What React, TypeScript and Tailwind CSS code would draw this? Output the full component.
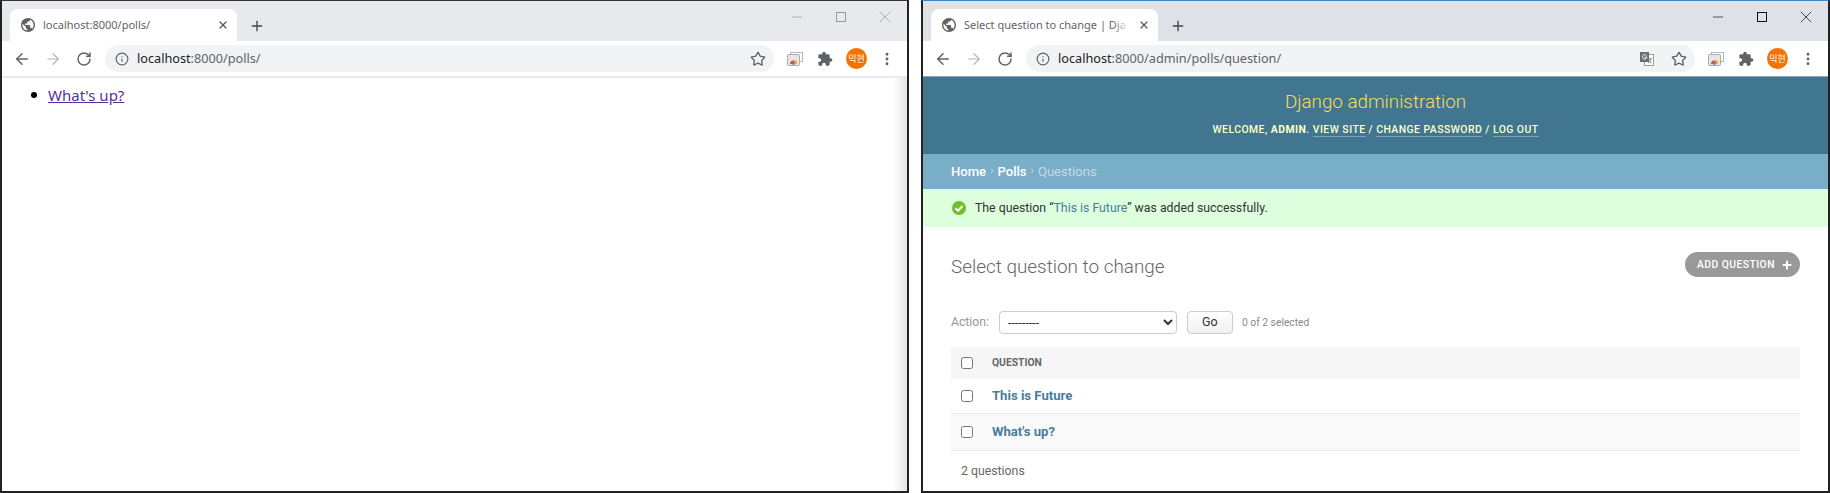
import React from 'react';
import { ArrowLeft, ArrowRight, Info, Minus, MoreVertical, Plus, RotateCw, Star, X } from 'lucide-react';

const globePath =
  'M12 2C6.48 2 2 6.48 2 12s4.48 10 10 10 10-4.48 10-10S17.52 2 12 2zm-1 17.93c-3.95-.49-7-3.85-7-7.93 0-.62.08-1.21.21-1.79L9 15v1c0 1.1.9 2 2 2v1.93zm6.9-2.54c-.26-.81-1-1.39-1.9-1.39h-1v-3c0-.55-.45-1-1-1H8v-2h2c.55 0 1-.45 1-1V7h2c1.1 0 2-.9 2-2v-.41c2.93 1.19 5 4.06 5 7.41 0 2.08-.8 3.97-2.1 5.39z';
const puzzlePath =
  'M20.5 11H19V7c0-1.1-.9-2-2-2h-4V3.5C13 2.12 11.88 1 10.5 1S8 2.12 8 3.5V5H4c-1.1 0-1.99.9-1.99 2v3.8H3.5c1.49 0 2.7 1.21 2.7 2.7s-1.21 2.7-2.7 2.7H2V20c0 1.1.9 2 2 2h3.8v-1.5c0-1.49 1.21-2.7 2.7-2.7 1.49 0 2.7 1.21 2.7 2.7V22H17c1.1 0 2-.9 2-2v-4h1.5c1.38 0 2.5-1.12 2.5-2.5S21.88 11 20.5 11z';

const TabsIcon = () => (
  <svg width="16" height="14" viewBox="0 0 16 14" className="ml-[13px] shrink-0">
    <rect x="3.5" y="0.5" width="12" height="9" fill="#fff" stroke="#b5b7ba" />
    <rect x="0.5" y="2.5" width="12" height="11" rx="1" fill="#e4e5e7" stroke="#a9abae" />
    <path d="M3 12a3.5 3.5 0 0 1 7 0z" fill="#dd4b3e" />
    <path d="M6.5 12a3.5 3.5 0 0 1 3.5-3.5V12z" fill="#f4b400" />
    <circle cx="6.5" cy="11.5" r="1.4" fill="#4285f4" />
  </svg>
);

const TranslateIcon = () => (
  <svg width="14" height="14" viewBox="0 0 14 14" className="shrink-0">
    <rect x="4.5" y="2.5" width="9" height="11" fill="#fff" stroke="#9a9da1" />
    <rect x="0" y="0" width="9" height="10" fill="#6a6d71" />
    <path d="M6.5 3.4A2.3 2.3 0 1 0 7 5.2H4.6" fill="none" stroke="#fff" strokeWidth="1" />
    <path d="M8 7h4M10 6v1M11 7c-.4 2-1.500 3-3 4M9 8.500c.6 1.200 1.500 2 2.700 2.500" fill="none" stroke="#777" strokeWidth=".8" />
  </svg>
);

const ChromeBar = ({ active, title, url, translate }: { active: boolean; title: string; url: string; translate?: boolean }) => (
  <>
    <div className={`flex h-[40px] items-start pl-[8px] ${active ? 'bg-[#dee1e6]' : 'bg-[#e7e9ec]'}`}>
      <div className="mt-[8px] flex h-[32px] w-[227px] items-center rounded-t-[8px] bg-white pl-[11px] pr-[8px]">
        <svg width="14" height="14" viewBox="2 2 20 20" className="shrink-0">
          <path d={globePath} fill="#5f6368" />
        </svg>
        <div className="relative ml-[8px] w-[165px] whitespace-nowrap font-['Noto_Sans','Noto_Sans_CJK_KR',sans-serif] text-[11px] text-[#5f6368]">
          {title}
          {active && <span className="absolute right-0 top-0 h-full w-[16px] bg-gradient-to-r from-transparent to-white" />}
        </div>
        <X size={12} strokeWidth={2.4} className="ml-auto shrink-0 text-[#55585c]" />
      </div>
      <Plus size={16} strokeWidth={2} className="ml-[12px] mt-[17px] shrink-0 text-[#404347]" />
      <div className="ml-auto flex items-center gap-[26px] pr-[12px] pt-[6px]">
        <Minus size={16} strokeWidth={1} className={`mr-[2px] ${active ? 'text-[#111]' : 'text-[#999]'}`} />
        <div className={`mx-[3px] h-[10px] w-[10px] border ${active ? 'border-[#111]' : 'border-[#999]'}`} />
        <X size={20} strokeWidth={0.9} className={active ? 'text-[#111]' : 'text-[#999]'} />
      </div>
    </div>
    <div className="flex h-[35px] items-center bg-white pl-[11px] pr-[12px]">
      <ArrowLeft size={18} strokeWidth={2} className="shrink-0 text-[#5f6368]" />
      <ArrowRight size={18} strokeWidth={1.600} className="ml-[13px] shrink-0 text-[#b4b6b9]" />
      <RotateCw size={16} strokeWidth={2.200} className="ml-[14px] shrink-0 text-[#5f6368]" />
      <div className="ml-[13px] flex h-[27px] flex-1 items-center rounded-full bg-[#f1f3f4] pl-[10px] pr-[8px]">
        <Info size={14} strokeWidth={2} className="shrink-0 text-[#5f6368]" />
        <span className="ml-[8px] font-['Noto_Sans','Noto_Sans_CJK_KR',sans-serif] text-[12.700px] text-[#5f6368]">
          <span className="text-[#202124]">localhost</span>:8000{url}
        </span>
        <div className="ml-auto flex items-center gap-[17px]">
          {translate && <TranslateIcon />}
          <Star size={16} strokeWidth={2} className="shrink-0 text-[#5f6368]" />
        </div>
      </div>
      <TabsIcon />
      <svg width="16" height="16" viewBox="0 0 24 24" className="ml-[14px] shrink-0">
        <path d={puzzlePath} fill="#5f6368" />
      </svg>
      <div className="ml-[13px] flex h-[21px] w-[21px] shrink-0 items-center justify-center rounded-full bg-[#f57200] font-['Noto_Sans_CJK_KR',sans-serif] text-[9px] text-white">
        익현
      </div>
      <MoreVertical size={16} strokeWidth={2.400} className="ml-[12px] shrink-0 text-[#5f6368]" />
    </div>
  </>
);

const PollsWindow = () => (
  <div className="flex h-[493px] w-[909px] shrink-0 flex-col border-x-2 border-b-2 border-t border-x-[#222] border-b-[#222] border-t-[#333] bg-white">
    <ChromeBar active={false} title="localhost:8000/polls/" url="/polls/" />
    <div className="relative flex-1 border-t-2 border-[#e8eaed] pl-[29px] pt-[6px] font-['Noto_Sans','Noto_Sans_CJK_KR',sans-serif] text-[15px]">
      <div className="flex items-center">
        <span className="h-[6px] w-[6px] rounded-full bg-black" />
        <a className="ml-[11px] text-[#5c2d9c] underline">What's up?</a>
      </div>
      <div className="absolute inset-y-0 right-0 w-[14px] bg-gradient-to-r from-transparent to-black/10" />
    </div>
  </div>
);

const AdminWindow = () => (
  <div className="ml-[12px] flex h-[493px] w-[909px] shrink-0 flex-col border-x-2 border-b-2 border-t border-x-[#222] border-b-[#222] border-t-[#3a87c8] bg-white">
    <ChromeBar active title="Select question to change | Dja" url="/admin/polls/question/" translate />
    <div className="flex-1 font-['Roboto',sans-serif]">
      <div className="flex h-[78px] flex-col items-center border-t border-[#8fa9b8] bg-[#417690] pt-[12px]">
        <h1 className="text-[18.800px] font-light leading-[26px] text-[#f5dd5d]">Django administration</h1>
        <div className="mt-[8px] text-[10.400px] font-medium uppercase leading-[14px] tracking-[0.47px] text-[#ffc]">
          Welcome, <strong className="font-bold">admin</strong>. <a className="border-b border-[#ffffff55]">View site</a> / <a className="border-b border-[#ffffff55]">Change password</a> / <a className="border-b border-[#ffffff55]">Log out</a>
        </div>
      </div>
      <div className="flex h-[35px] items-center bg-[#79aec8] pl-[28px] text-[13.100px] text-[#c4dce8]">
        <a className="font-medium text-white">Home</a>
        <span className="mx-[4px] text-[11px]">›</span>
        <a className="font-medium text-white">Polls</a>
        <span className="mx-[4px] text-[11px]">›</span>
        Questions
      </div>
      <div className="flex h-[38px] items-center bg-[#dfd] pl-[29px] text-[12.300px] text-[#333]">
        <svg width="14" height="14" viewBox="0 0 14 14" className="shrink-0">
          <circle cx="7" cy="7" r="7" fill="#70bf2b" />
          <path d="M3.500 7.200l2.500 2.500 4.500-4.700" fill="none" stroke="#fff" strokeWidth="2" />
        </svg>
        <span className="ml-[9px]">
          The question “<a className="text-[#447e9b]">This is Future</a>” was added successfully.
        </span>
      </div>
      <div className="pl-[28px] pr-[28px]">
        <div className="flex h-[84px] items-start justify-between pt-[26px]">
          <h2 className="text-[18.900px] font-light leading-[28px] text-[#666]">Select question to change</h2>
          <a className="-mt-[1px] flex h-[25px] w-[115px] items-center rounded-full bg-[#999] pl-[12px] text-[10.300px] font-medium uppercase tracking-[0.47px] text-white">
            Add question
            <Plus size={12} strokeWidth={4} className="ml-[6px]" />
          </a>
        </div>
        <div className="flex h-[23px] items-center">
          <label className="text-[12.200px] text-[#999]">Action:</label>
          <select className="ml-[10px] h-[23px] w-[178px] rounded-[4px] border border-[#ccc] bg-white pl-[4px] text-[12.500px] text-[#333]">
            <option>---------</option>
          </select>
          <button className="ml-[10px] h-[23px] w-[46px] rounded-[4px] border border-[#ccc] bg-gradient-to-b from-white to-[#f0f0f0] text-[12.500px] text-[#333]">Go</button>
          <span className="ml-[9px] text-[10.300px] text-[#888]">0 of 2 selected</span>
        </div>
        <div className="mt-[13px] flex h-[32px] items-center bg-[#f6f6f6] pl-[10px]">
          <input type="checkbox" className="m-0 h-[12px] w-[12px]" />
          <span className="ml-[19px] text-[10.300px] font-bold text-[#666]">QUESTION</span>
        </div>
        <div className="flex h-[35px] items-center border-b border-[#eee] pl-[10px]">
          <input type="checkbox" className="m-0 h-[12px] w-[12px]" />
          <a className="ml-[19px] text-[13.100px] font-bold text-[#447e9b]">This is Future</a>
        </div>
        <div className="flex h-[37px] items-center border-b border-[#eee] bg-[#f9f9f9] pl-[10px]">
          <input type="checkbox" className="m-0 h-[12px] w-[12px]" />
          <a className="ml-[19px] text-[13.100px] font-bold text-[#447e9b]">What's up?</a>
        </div>
        <div className="pl-[10px] pt-[12px] text-[12.300px] leading-[16px] text-[#666]">2 questions</div>
      </div>
    </div>
  </div>
);

export default function App() {
  return (
    <div className="flex h-[493px] w-[1830px] overflow-hidden bg-white">
      <PollsWindow />
      <AdminWindow />
    </div>
  );
}
